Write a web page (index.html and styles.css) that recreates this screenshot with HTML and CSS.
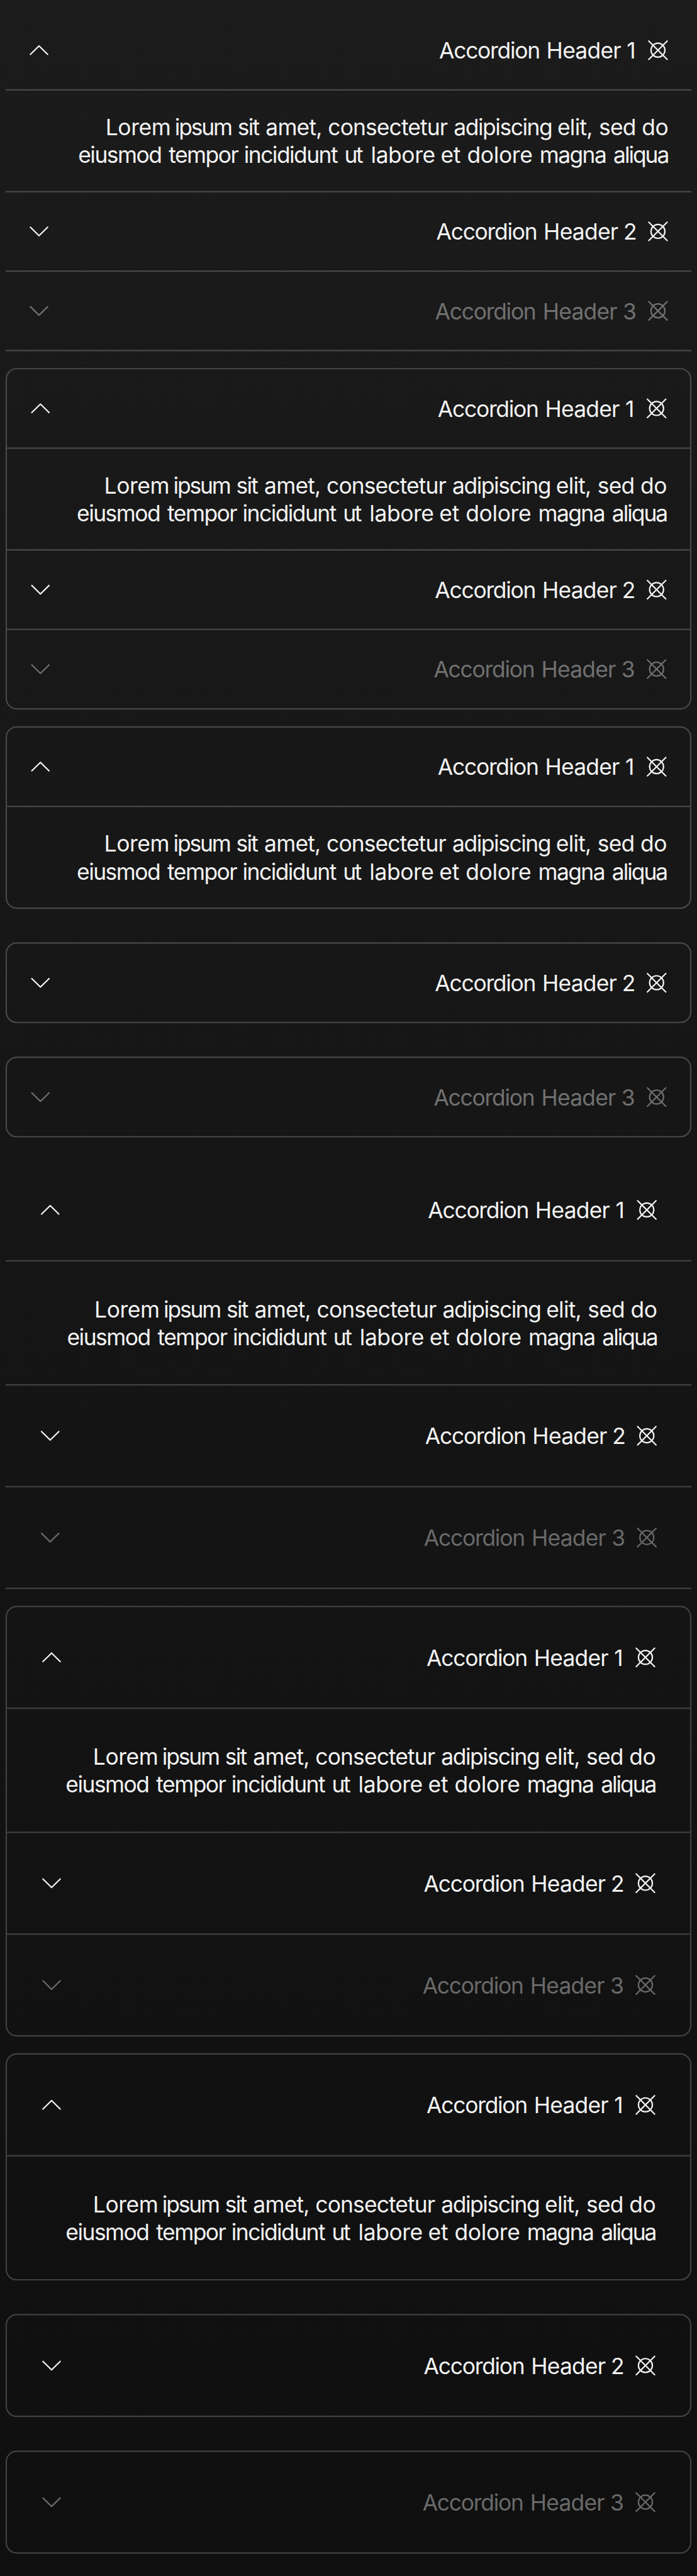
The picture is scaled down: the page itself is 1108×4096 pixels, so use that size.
FILE: index.html
```
<!DOCTYPE html>
<html lang="en">
<head>
<meta charset="utf-8">
<title>Accordion</title>
<link rel="stylesheet" href="styles.css">
<script src="accordion.js" defer></script>
</head>
<body>
<main class="page"></main>
</body>
</html>
```
FILE: accordion.js
```
const mark = `<svg class="icon" viewBox="0 0 16 16"><circle cx="8" cy="8" r="5"/><path d="M1.4 1.4l13.2 13.2M14.6 1.4L1.4 14.6"/></svg>`;
const chevron = (open) => `<svg class="icon" viewBox="0 0 16 16"><path d="${open ? 'M1.8 11L8 4.9 14.2 11' : 'M1.8 5L8 11.1 14.2 5'}"/></svg>`;

// Tracking table: [word, letter spacing, pitch to the next word, natural advance]
const SPACE = 4.5;
const line1 = [
  ['Lorem', -0.2, 49.6, 47.7], ['ipsum', -1.0, 45.1, 45.6], ['sit', -0.8, 20.1, 17.55],
  ['amet,', -0.37, 44.6, 42.1], ['consectetur', -0.41, 90.2, 90.2], ['adipiscing', -0.66, 74.3, 77],
  ['elit,', -0.35, 29.8, 26.9], ['sed', -0.4, 30.8, 27.6], ['do', -0.2, 19.6, 19.4],
];
const line2 = [
  ['eiusmod', -0.69, 65, 64.5], ['tempor', -0.7, 54, 53.9], ['incididunt', -0.71, 72, 73.95],
  ['ut', -1.1, 19, 14.7], ['labore', -0.2, 50, 47.3], ['et', -0.1, 19, 14.6],
  ['dolore', -0.16, 52, 47.9], ['magna', -0.73, 53, 51.3], ['aliqua', -0.93, 40, 45],
];
const titles = [
  [['Accordion', -0.58, 77, 77.4], ['Header', -0.36, 57.6, 55.5], ['1', 0, 6.4, 6.5]],
  [['Accordion', -0.58, 77, 77.4], ['Header', -0.36, 57.2, 55.5], ['2', 0, 8.8, 9.75]],
  [['Accordion', -0.58, 77.2, 77.4], ['Header', -0.36, 57.4, 55.5], ['3', 0, 9.3, 9.9]],
];

const track = (words) => words.map(([word, spacing, pitch, advance], i) => {
  const text = i < words.length - 1 ? word + ' ' : word;
  const width = advance + (text.length - word.length) * SPACE + spacing * text.length;
  return `<span style="letter-spacing:${spacing}px;margin-right:${(pitch - width).toFixed(2)}px">${text}</span>`;
}).join('');

const header = (n, open) => `
  <div class="header">
    ${chevron(open)}
    <div class="label"><div class="title">${track(titles[n - 1])}</div>${mark}</div>
  </div>`;

const content = `<div class="content">${track(line1)}<br>${track(line2)}</div>`;

const accordion = (size, kind) => `
  <section class="accordion ${size} ${kind}">
    <div class="item">${header(1, true)}${content}</div>
    <div class="item">${header(2, false)}</div>
    <div class="item disabled">${header(3, false)}</div>
  </section>`;

document.querySelector('.page').innerHTML = ['compact', 'large']
  .flatMap((size) => ['flat', 'boxed', 'split'].map((kind) => accordion(size, kind)))
  .join('');
```
FILE: styles.css
```
* {
  box-sizing: border-box;
}

html {
  background: #0f0f0f;
}

body {
  margin: 0;
  height: 4096px;
  overflow: hidden;
}

.page {
  display: flex;
  flex-direction: column;
  gap: 12px;
  width: 500px;
  height: 1848px;
  padding: 8px 4px;
  transform: scale(2.216, 2.21645);
  transform-origin: 0 0;
  background: linear-gradient(#1b1b1b, #0f0f0f);
  color: #f3f3f3;
  font: 400 16px/20px Inter, "Liberation Sans", sans-serif;
}

.accordion {
  --pad: 16px;
  --head: 56px;
  --body: 72px;
  --line: #484848;
  --muted: #707070;
  display: flex;
  flex-direction: column;
}

.large {
  --pad: 24px;
  --head: 72px;
  --body: 88px;
  --line: #414141;
  --muted: #696969;
}

.header {
  display: flex;
  align-items: center;
  justify-content: space-between;
  height: calc(var(--head) + 1px);
  padding: 0 var(--pad);
  border-bottom: 1px solid var(--line);
}

.label {
  display: flex;
  align-items: center;
  gap: 8px;
}

.title {
  white-space: pre;
}

.icon {
  display: block;
  width: 16px;
  height: 16px;
  fill: none;
  stroke: currentColor;
  stroke-width: 1;
  stroke-linecap: round;
  stroke-linejoin: round;
}

.content {
  height: calc(var(--body) + 1px);
  padding: var(--pad);
  border-bottom: 1px solid var(--line);
  text-align: right;
  white-space: pre;
}

/* the tracked lines end on the right padding edge */
.disabled .icon,
.disabled .label {
  color: var(--muted);
}

.boxed,
.split .item {
  border: 1px solid var(--line);
  border-radius: 8px;
}

.boxed .item:last-child .header,
.split .header:last-child {
  height: var(--head);
  border-bottom: 0;
}

.split .content {
  height: var(--body);
  border-bottom: 0;
}

.split {
  gap: 24px;
  margin-bottom: 4px;
}
```
